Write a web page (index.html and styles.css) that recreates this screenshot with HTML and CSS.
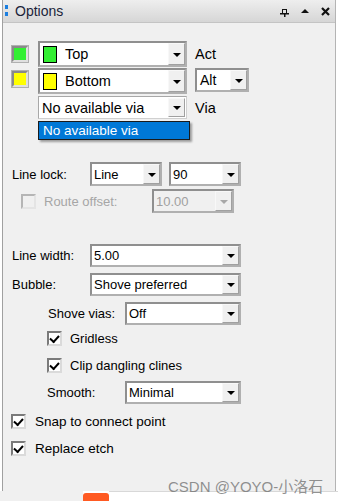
FILE: index.html
```html
<!DOCTYPE html>
<html lang="en">
<head>
    <meta charset="UTF-8">
    <title>Options</title>
    <link rel="stylesheet" href="styles.css">
</head>
<body>
    <div class="panel">
        <!-- Title bar -->
        <div class="titlebar">
            <span class="grip"><i></i><i></i></span>
            <span class="title">Options</span>
            <span class="title-tools">
                <svg width="9" height="8" viewBox="0 0 9 8"><rect x="2.5" y="0.5" width="4" height="4" fill="none" stroke="#111"/><rect x="0" y="4" width="9" height="1.5" fill="#111"/><rect x="4" y="5" width="1.5" height="3" fill="#111"/></svg>
                <svg width="8" height="4" viewBox="0 0 8 4"><path d="M0 4 L4 0 L8 4 Z" fill="#111"/></svg>
                <svg width="9" height="9" viewBox="0 0 9 9"><path d="M1 1 L8 8 M8 1 L1 8" stroke="#111" stroke-width="2.2"/></svg>
            </span>
        </div>

        <div class="content">
            <!-- Layers -->
            <div class="row layer-row">
                <span class="color-box green"></span>
                <div class="combo combo-layer">
                    <span class="swatch green"></span>
                    <span class="combo-text">Top</span>
                    <span class="drop"></span>
                </div>
                <span class="side-label">Act</span>
            </div>
            <div class="row layer-row second">
                <span class="color-box yellow"></span>
                <div class="combo combo-layer">
                    <span class="swatch yellow"></span>
                    <span class="combo-text">Bottom</span>
                    <span class="drop"></span>
                </div>
                <div class="combo combo-alt">
                    <span class="combo-text">Alt</span>
                    <span class="drop"></span>
                </div>
            </div>
            <div class="row via-row">
                <div class="combo combo-via">
                    <span class="combo-text big">No available via</span>
                    <span class="drop"></span>
                </div>
                <span class="side-label">Via</span>
            </div>

            <!-- Line lock -->
            <div class="row lock-row">
                <span class="label">Line lock:</span>
                <div class="combo combo-small">
                    <span class="combo-text">Line</span>
                    <span class="drop"></span>
                </div>
                <div class="combo combo-small angle">
                    <span class="combo-text">90</span>
                    <span class="drop"></span>
                </div>
            </div>
            <div class="row offset-row">
                <span class="check disabled"></span>
                <span class="check-label disabled-text">Route offset:</span>
                <div class="combo combo-offset disabled">
                    <span class="combo-text">10.00</span>
                    <span class="drop"></span>
                </div>
            </div>

            <!-- Width / bubble -->
            <div class="row width-row">
                <span class="label">Line width:</span>
                <div class="combo combo-wide">
                    <span class="combo-text">5.00</span>
                    <span class="drop"></span>
                </div>
            </div>
            <div class="row bubble-row">
                <span class="label">Bubble:</span>
                <div class="combo combo-wide">
                    <span class="combo-text">Shove preferred</span>
                    <span class="drop"></span>
                </div>
            </div>
            <div class="row sub-row shove-row">
                <span class="label sub-label">Shove vias:</span>
                <div class="combo combo-sub">
                    <span class="combo-text">Off</span>
                    <span class="drop"></span>
                </div>
            </div>
            <div class="row sub-row gridless-row">
                <span class="check checked"></span>
                <span class="check-label">Gridless</span>
            </div>
            <div class="row sub-row clip-row">
                <span class="check checked"></span>
                <span class="check-label">Clip dangling clines</span>
            </div>
            <div class="row sub-row smooth-row">
                <span class="label sub-label">Smooth:</span>
                <div class="combo combo-sub">
                    <span class="combo-text">Minimal</span>
                    <span class="drop"></span>
                </div>
            </div>

            <!-- Bottom options -->
            <div class="row snap-row">
                <span class="check checked"></span>
                <span class="check-label">Snap to connect point</span>
            </div>
            <div class="row etch-row">
                <span class="check checked"></span>
                <span class="check-label">Replace etch</span>
            </div>
        </div>

        <!-- Open dropdown list -->
        <div class="dropdown-list">No available via</div>
    </div>

    <div class="bottom-strip">
        <span class="strip-left"></span>
        <span class="strip-mark"></span>
        <span class="strip-right"></span>
    </div>

    <div class="watermark">CSDN @YOYO-小洛石</div>
</body>
</html>
```

FILE: styles.css
```css
* {
    margin: 0;
    padding: 0;
    box-sizing: border-box;
}

body {
    width: 338px;
    height: 501px;
    overflow: hidden;
    background: #fff;
    font-family: "Liberation Sans", Arial, sans-serif;
    font-size: 13px;
    color: #000;
    position: relative;
}

.panel {
    position: relative;
    margin-left: 2px;
    width: 334px;
    height: 491px;
    background: #f0f0f0;
    border-left: 1px solid #a0a0a0;
    border-right: 1px solid #b4b4b4;
}

/* Title bar */
.titlebar {
    height: 23px;
    display: flex;
    align-items: center;
    padding-left: 2px;
    background: linear-gradient(to bottom, #eeeeee, #d6d6d6);
    border-bottom: 1px solid #c4c4c4;
}

.grip {
    display: flex;
    flex-direction: column;
    gap: 3px;
    width: 10px;
    margin-top: -2px;
}

.grip i {
    display: block;
    width: 3px;
    height: 4px;
    background: #1c7fe0;
}

.title {
    font-size: 14px;
    color: #1b1f3a;
}

.title-tools {
    margin-left: auto;
    display: flex;
    align-items: center;
    padding-right: 5px;
    gap: 12px;
}

.title-tools svg:first-child {
    margin-top: 3px;
}

/* Content rows */
.content {
    padding-top: 18px;
}

.row {
    display: flex;
    align-items: center;
}

.layer-row {
    height: 26px;
    padding-left: 9px;
}

.layer-row.second {
    margin-top: 1px;
    align-items: flex-start;
}

.layer-row.second .color-box {
    margin-top: 3px;
}

.color-box {
    width: 16px;
    height: 16px;
    border: 2px solid;
    border-color: #8a8a8a #e0e0e0 #e0e0e0 #8a8a8a;
    outline: 1px solid #b0b0b0;
    margin-right: 10px;
}

.color-box.green {
    background: #33f033;
}

.color-box.yellow {
    background: #ffff00;
}

.side-label {
    margin-left: 8px;
    font-size: 14.5px;
}

/* Combo boxes */
.combo {
    display: flex;
    align-items: center;
    height: 23px;
    background: #fff;
    border: 2px solid;
    border-color: #8f8f8f #b0b0b0 #b0b0b0 #8f8f8f;
    position: relative;
}

.combo-text {
    flex: 1;
    padding-left: 2px;
    white-space: nowrap;
    overflow: hidden;
}

.combo-text.big {
    font-size: 14.5px;
    padding-left: 3px;
}

.drop {
    width: 17px;
    align-self: stretch;
    background: #f0f0f0;
    border: 1px solid;
    border-color: #f8f8f8 #a0a0a0 #a0a0a0 #f8f8f8;
    display: flex;
    align-items: center;
    justify-content: center;
}

.drop::after {
    content: "";
    width: 0;
    height: 0;
    border-left: 4px solid transparent;
    border-right: 4px solid transparent;
    border-top: 4px solid #000;
    margin-top: 1px;
}

.combo-layer {
    width: 149px;
    height: 26px;
}

.combo-layer .combo-text {
    font-size: 14.5px;
    padding-left: 8px;
}

.swatch {
    width: 14px;
    height: 17px;
    margin-left: 3px;
    border: 1px solid #000;
}

.swatch.green {
    background: #33ee33;
}

.swatch.yellow {
    background: #ffff00;
}

.combo-alt {
    width: 54px;
    height: 24px;
    margin-left: 8px;
}

.combo-alt .combo-text {
    font-size: 14px;
    padding-left: 3px;
}

.via-row {
    margin-top: 2px;
    padding-left: 35px;
    height: 23px;
}

.combo-via {
    width: 149px;
    height: 23px;
    border-color: #a8a8a8 #d0d0d0 #d0d0d0 #a8a8a8;
    border-width: 1px;
}

.combo-via .drop {
    margin: 1px 1px 1px 0;
}

/* Line lock */
.lock-row {
    margin-top: 43px;
    padding-left: 9px;
    height: 24px;
}

.label {
    width: 78px;
}

.combo-small {
    width: 72px;
    height: 24px;
}

.combo-small.angle {
    margin-left: 7px;
}

.offset-row {
    margin-top: 3px;
    padding-left: 18px;
    height: 24px;
}

.offset-row .check-label {
    width: 108px;
}

.combo-offset {
    width: 82px;
    height: 24px;
}

.combo.disabled {
    background: #f0f0f0;
    color: #a0a0a0;
}

.combo.disabled .drop::after {
    border-top-color: #a8a8a8;
}

.disabled-text {
    color: #a6a6a6;
}

/* Checkboxes */
.check {
    width: 15px;
    height: 15px;
    background: #fff;
    border: 2px solid;
    border-color: #7a7a7a #dadada #dadada #7a7a7a;
    display: flex;
    align-items: center;
    justify-content: center;
}

.check.checked::after {
    content: "";
    width: 7px;
    height: 4px;
    border-left: 2.5px solid #000;
    border-bottom: 2.5px solid #000;
    transform: rotate(-48deg);
    margin-top: -2px;
}

.check.disabled {
    background: #f0f0f0;
    border-color: #b5b5b5 #e4e4e4 #e4e4e4 #b5b5b5;
}

.check-label {
    margin-left: 8px;
}

/* Width / bubble */
.width-row {
    margin-top: 31px;
    padding-left: 9px;
    height: 23px;
}

.combo-wide {
    width: 151px;
}

.bubble-row {
    margin-top: 6px;
    padding-left: 9px;
    height: 23px;
}

.sub-row {
    padding-left: 44px;
}

.shove-row {
    margin-top: 6px;
    height: 23px;
    padding-left: 45px;
}

.sub-label {
    width: 77px;
}

.combo-sub {
    width: 116px;
}

.gridless-row {
    margin-top: 6px;
    height: 15px;
}

.clip-row {
    margin-top: 12px;
    height: 15px;
}

.smooth-row {
    margin-top: 8px;
    height: 23px;
}

.smooth-row .sub-label {
    width: 78px;
}

.snap-row {
    margin-top: 10px;
    padding-left: 8px;
    height: 15px;
}

.snap-row .check-label,
.etch-row .check-label {
    margin-left: 9px;
    font-size: 13.5px;
}

.etch-row {
    margin-top: 12px;
    padding-left: 8px;
    height: 15px;
}

/* Open dropdown */
.dropdown-list {
    position: absolute;
    left: 35px;
    top: 121px;
    width: 152px;
    height: 19px;
    padding-left: 4px;
    line-height: 17px;
    font-size: 13.5px;
    background: #0078d7;
    color: #fff;
    border: 1px solid #1b1b1b;
    box-shadow: 2px 2px 2px rgba(0, 0, 0, 0.35);
}

/* Bottom */
.bottom-strip {
    display: flex;
    height: 10px;
}

.strip-left {
    width: 83px;
    background: #f0f0f0;
}

.strip-mark {
    width: 26px;
    background: #ff5a22;
    border-radius: 3px 3px 0 0;
    margin-top: 2px;
}

.strip-right {
    flex: 1;
    background: #fff;
    border-top: 1px solid #d8d8d8;
}

.watermark {
    position: absolute;
    left: 168px;
    top: 475px;
    font-size: 15px;
    color: rgba(110, 110, 110, 0.75);
    font-family: "Liberation Sans", "Noto Sans CJK SC", sans-serif;
}
```
